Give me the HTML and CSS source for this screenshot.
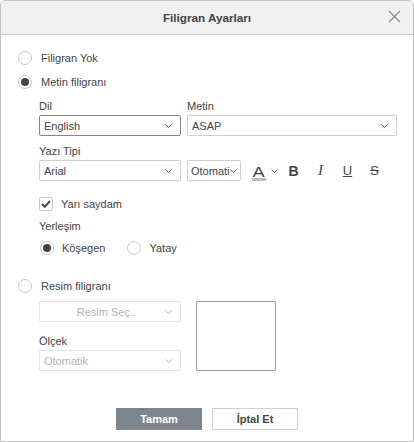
FILE: index.html
```html
<!DOCTYPE html>
<html>
<head>
<meta charset="utf-8">
<link rel="stylesheet" href="styles.css">
</head>
<body>
<div class="dialog">
  <div class="header">
    <span class="title">Filigran Ayarları</span>
    <svg class="close" width="13" height="13" viewBox="0 0 13 13"><path d="M1 1L12 12M12 1L1 12" stroke="#8a8a8a" stroke-width="1.2" fill="none"/></svg>
  </div>
  <div class="body">
    <div class="radio-row r1"><span class="radio"></span><span>Filigran Yok</span></div>
    <div class="radio-row r2"><span class="radio on"></span><span>Metin filigranı</span></div>

    <div class="section">
      <div class="grid-row">
        <div class="field w141">
          <div class="label">Dil</div>
          <div class="select focus"><span>English</span><svg class="chev" width="7" height="4" viewBox="0 0 7 4"><path d="M0.5 0.5L3.5 3.5L6.5 0.5" stroke="#666" fill="none"/></svg></div>
        </div>
        <div class="field w209">
          <div class="label">Metin</div>
          <div class="select"><span>ASAP</span><svg class="chev" width="7" height="4" viewBox="0 0 7 4"><path d="M0.5 0.5L3.5 3.5L6.5 0.5" stroke="#666" fill="none"/></svg></div>
        </div>
      </div>

      <div class="grid-row mt8">
        <div class="field w141">
          <div class="label">Yazı Tipi</div>
          <div class="select"><span>Arial</span><svg class="chev" width="7" height="4" viewBox="0 0 7 4"><path d="M0.5 0.5L3.5 3.5L6.5 0.5" stroke="#666" fill="none"/></svg></div>
        </div>
        <div class="field w54">
          <div class="label">&nbsp;</div>
          <div class="select small"><span>Otomati</span><svg class="chev tight" width="7" height="4" viewBox="0 0 7 4"><path d="M0.5 0.5L3.5 3.5L6.5 0.5" stroke="#666" fill="none"/></svg></div>
        </div>
        <div class="tools">
          <div class="tool color"><span class="a"><span class="aglyph">A</span></span><svg class="chev" width="7" height="4" viewBox="0 0 7 4"><path d="M0.5 0.5L3.5 3.5L6.5 0.5" stroke="#666" fill="none"/></svg></div>
          <div class="tool b">B</div>
          <div class="tool i">I</div>
          <div class="tool u">U</div>
          <div class="tool s">S</div>
        </div>
      </div>

      <div class="check-row"><span class="check"><svg width="10" height="8" viewBox="0 0 10 8"><path d="M1 4L3.8 6.8L9 1" stroke="#444" stroke-width="2" fill="none"/></svg></span><span>Yarı saydam</span></div>

      <div class="label mt-pos">Yerleşim</div>
      <div class="pos-row">
        <div class="radio-row"><span class="radio on"></span><span>Köşegen</span></div>
        <div class="radio-row"><span class="radio"></span><span>Yatay</span></div>
      </div>
    </div>

    <div class="radio-row r3"><span class="radio"></span><span>Resim filigranı</span></div>

    <div class="section img-sec">
      <div class="img-left">
        <div class="select disabled center"><span>Resim Seç..</span><svg class="chev" width="7" height="4" viewBox="0 0 7 4"><path d="M0.5 0.5L3.5 3.5L6.5 0.5" stroke="#aaa" fill="none"/></svg></div>
        <div class="label mt12">Ölçek</div>
        <div class="select disabled"><span>Otomatik</span><svg class="chev" width="7" height="4" viewBox="0 0 7 4"><path d="M0.5 0.5L3.5 3.5L6.5 0.5" stroke="#aaa" fill="none"/></svg></div>
      </div>
      <div class="preview"></div>
    </div>

    <div class="buttons">
      <div class="btn primary">Tamam</div>
      <div class="btn">İptal Et</div>
    </div>
  </div>
</div>
</body>
</html>
```

FILE: styles.css
```css
* { box-sizing: border-box; }
body {
  margin: 0;
  font-family: Arial, "Liberation Sans", sans-serif;
  font-size: 11px;
  color: #444;
  background: #fff;
}
.dialog {
  width: 414px;
  height: 442px;
  border: 1px solid #c4c4c4;
  border-radius: 5px 5px 0 0;
  overflow: hidden;
  display: flex;
  flex-direction: column;
}
.header {
  height: 34px;
  background: #f1f1f1;
  border-bottom: 1px solid #cbcbcb;
  display: flex;
  align-items: center;
  justify-content: center;
  position: relative;
}
.title {
  font-weight: bold;
  font-size: 11.7px;
  color: #444;
}
.close {
  position: absolute;
  right: 12px;
  top: 9px;
}
.body {
  padding: 16px 0 0 17px;
  display: flex;
  flex-direction: column;
  flex: 1;
}
.radio-row {
  display: flex;
  align-items: center;
  height: 14px;
}
.radio {
  width: 14px;
  height: 14px;
  border: 1px solid #c8c8c8;
  border-radius: 50%;
  margin-right: 9px;
  display: flex;
  align-items: center;
  justify-content: center;
  background: #fff;
}
.radio.on::after {
  content: "";
  width: 8px;
  height: 8px;
  border-radius: 50%;
  background: #444;
}
.r2 { margin-top: 10px; }
.r3 { margin-top: 24px; }
.section {
  padding-left: 21px;
  margin-top: 10px;
}
.grid-row {
  display: flex;
  gap: 6px;
  align-items: flex-end;
}
.mt8 { margin-top: 8px; }
.mt12 { margin-top: 12px; }
.mt-pos { margin-top: 8px; }
.label {
  height: 14px;
  line-height: 14px;
  margin-bottom: 2px;
}
.w141 { width: 142px; }
.w209 { width: 210px; }
.w54 { width: 54px; }
.select {
  height: 21px;
  border: 1px solid #cfcfcf;
  border-radius: 2px;
  display: flex;
  align-items: center;
  justify-content: space-between;
  padding: 0 8px 0 4px;
  background: #fff;
}
.select.focus { border-color: #848484; }
.select.small { padding: 0 3px 0 3px; }
.chev { flex: none; }
.select.disabled {
  color: #b4b4b4;
  width: 142px;
  border-color: #e2e2e2;
}
.select.center { justify-content: flex-end; }
.select.center span { margin-right: 29px; }
.tools {
  display: flex;
  align-items: center;
  height: 21px;
}
.tool {
  width: 27px;
  font-size: 14px;
  color: #444;
  display: flex;
  align-items: center;
  justify-content: center;
}
.tool.color {
  width: 33px;
  gap: 5px;
  justify-content: flex-start;
  padding-left: 5px;
}
.tool.color .a {
  width: 14px;
  height: 16px;
  display: flex;
  justify-content: center;
  align-items: flex-end;
  border-bottom: 3px solid #bdbdbd;
  margin-top: 4px;
}
.aglyph {
  font-size: 14px;
  line-height: 12px;
  display: inline-block;
  transform: scaleX(1.3);
  font-weight: normal;
}
.tool.b { font-weight: bold; }
.tool.i { font-family: "Liberation Serif", serif; font-style: italic; font-size: 15px; }
.tool.u { text-decoration: underline; font-size: 13px; }
.tool.s { text-decoration: line-through; font-size: 13px; }
.check-row {
  display: flex;
  align-items: center;
  margin-top: 16px;
  height: 14px;
}
.check {
  width: 14px;
  height: 14px;
  border: 1px solid #c8c8c8;
  border-radius: 2px;
  display: flex;
  align-items: center;
  justify-content: center;
  margin-right: 8px;
}
.pos-row {
  display: flex;
  gap: 22px;
  margin-top: 8px;
  padding-left: 1px;
}
.pos-row .radio { margin-right: 8px; }
.img-sec {
  display: flex;
  gap: 15px;
  margin-top: 8px;
}
.preview {
  width: 80px;
  height: 70px;
  border: 1px solid #9a9a9a;
  border-radius: 2px;
}
.buttons {
  display: flex;
  justify-content: center;
  gap: 10px;
  margin-top: 37px;
  margin-left: -17px;
}
.btn {
  width: 86px;
  height: 22px;
  border: 1px solid #cfcfcf;
  display: flex;
  align-items: center;
  justify-content: center;
  font-weight: bold;
  font-size: 11px;
  color: #444;
}
.btn.primary {
  background: #7d858d;
  border-color: #7d858d;
  color: #fff;
}
```
